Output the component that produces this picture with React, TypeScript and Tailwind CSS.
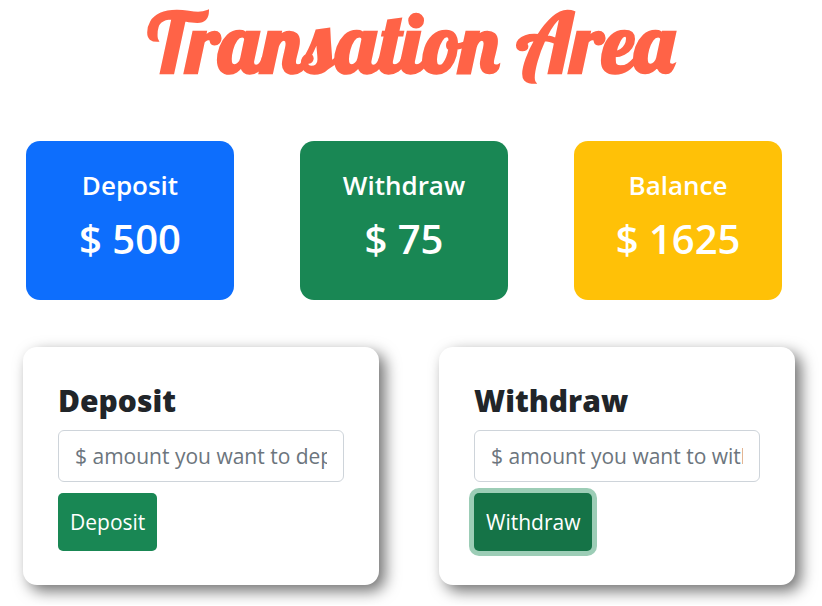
type StatProps = { label: string; amount: number; tone: string };

function StatCard({ label, amount, tone }: StatProps) {
  return (
    <section className={`flex flex-col items-center rounded-[14px] pt-[26px] pb-[34px] text-white ${tone}`}>
      <h2 className="text-[26px] leading-9 font-semibold">{label}</h2>
      <p className="mt-2 text-[40px] leading-[55px] font-semibold">$ {amount}</p>
    </section>
  );
}

type FormProps = { id: string; title: string; placeholder: string; buttonTone: string };

function AmountForm({ id, title, placeholder, buttonTone }: FormProps) {
  return (
    <form
      className="rounded-[14px] bg-white px-[35px] py-[34px] shadow-[6px_6px_15px_#707070]"
      onSubmit={(event) => event.preventDefault()}
    >
      <label htmlFor={id} className="block text-[30px] leading-10 font-extrabold">
        {title}
      </label>
      <input
        id={id}
        type="text"
        placeholder={placeholder}
        className="mt-[9px] block h-[52px] w-full rounded-md border border-[#ced4da] px-4 text-[21px] placeholder:text-[#6c757d]"
      />
      <button
        type="submit"
        className={`mt-[11px] block h-[58px] rounded-[5px] px-3 pt-0.5 text-[21px] text-white ${buttonTone}`}
      >
        {title}
      </button>
    </form>
  );
}

export default function App() {
  return (
    <main className="bg-white pb-5 font-['Segoe_UI','Open_Sans','Noto_Sans',sans-serif] text-[#212529]">
      <h1 className="text-center font-['Lobster','Liberation_Serif',serif] text-[83px] leading-[84px] font-bold text-[#ff6347]">
        Transation Area
      </h1>
      <div className="mt-[57px] grid grid-cols-3 gap-[66px] pr-10 pl-[26px]">
        <StatCard label="Deposit" amount={500} tone="bg-[#0d6efd]" />
        <StatCard label="Withdraw" amount={75} tone="bg-[#198754]" />
        <StatCard label="Balance" amount={1625} tone="bg-[#ffc107]" />
      </div>
      <div className="mt-[47px] grid grid-cols-2 gap-[60px] pr-[27px] pl-[23px]">
        <AmountForm
          id="deposit-amount"
          title="Deposit"
          placeholder="$ amount you want to deposit"
          buttonTone="bg-[#198754]"
        />
        <AmountForm
          id="withdraw-amount"
          title="Withdraw"
          placeholder="$ amount you want to withdraw"
          buttonTone="bg-[#157347] shadow-[0_0_0_5px_#9ccdb6]"
        />
      </div>
    </main>
  );
}
